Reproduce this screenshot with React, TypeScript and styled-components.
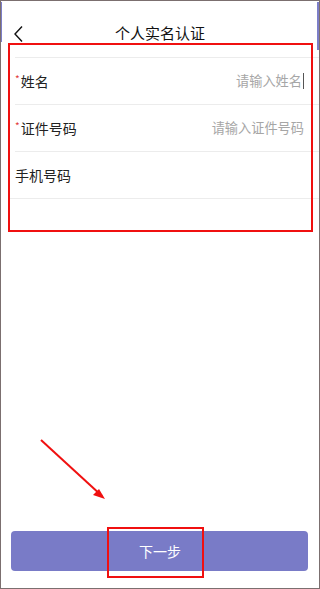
import React from "react";
import styled, { createGlobalStyle } from "styled-components";

const Global = createGlobalStyle`
  html, body { margin: 0; padding: 0; background: #7b6f6f; }
  body { font-family: "Noto Sans CJK SC", "Noto Sans", sans-serif; }
  * { box-sizing: border-box; }
`;

const Frame = styled.div`
  position: relative;
  margin: 1px 1px 1px 1px;
  width: 318px;
  height: 587px;
  background: #fff;
  display: flex;
  flex-direction: column;
  overflow: hidden;
`;

const EdgeStripe = styled.div<{ $side: "left" | "right" }>`
  position: absolute;
  top: 1px;
  ${(p) => (p.$side === "left" ? "left: 0;" : "right: 0;")}
  width: ${(p) => (p.$side === "left" ? "1px" : "2px")};
  height: ${(p) => (p.$side === "left" ? "40px" : "48px")};
  background: #7c7ec8;
`;

const Header = styled.div`
  position: relative;
  height: 46px;
  padding-top: 20px;
  display: flex;
  align-items: center;
  justify-content: center;
`;

const Back = styled.div`
  position: absolute;
  left: 11px;
  top: 24px;
  width: 14px;
  height: 18px;
  display: flex;
`;

const Title = styled.div`
  font-size: 15px;
  color: #111;
  line-height: 20px;
  margin-top: -3px;
`;

const Form = styled.div`
  padding-top: 10px;
  display: flex;
  flex-direction: column;
`;

const Row = styled.div`
  height: 47px;
  margin-left: 14px;
  border-top: 1px solid #ececec;
  display: flex;
  align-items: center;
  justify-content: space-between;
  padding-right: 15px;
  padding-bottom: 1px;
`;

const EndLine = styled.div`
  margin-left: 9px;
  border-top: 1px solid #ececec;
`;

const Label = styled.div`
  font-size: 14px;
  color: #222;
  display: flex;
  align-items: center;
`;

const Star = styled.span`
  color: #e23b3b;
  font-size: 10px;
  margin-right: 1px;
  margin-top: -4px;
`;

const Placeholder = styled.div`
  font-size: 13.2px;
  color: #a6a6a6;
  display: flex;
  align-items: center;
`;

const Cursor = styled.span`
  display: inline-block;
  width: 1px;
  height: 16px;
  background: #555;
  margin-left: 1px;
`;

const Spacer = styled.div`
  flex: 1;
`;

const Button = styled.div`
  margin: 0 11px 17px 10px;
  height: 40px;
  background: #797bc7;
  border-radius: 4px;
  color: #fff;
  font-size: 14px;
  display: flex;
  align-items: center;
  justify-content: center;
  padding-left: 1px;
`;

const RedBox = styled.div<{ $x: number; $y: number; $w: number; $h: number }>`
  position: absolute;
  left: ${(p) => p.$x}px;
  top: ${(p) => p.$y}px;
  width: ${(p) => p.$w}px;
  height: ${(p) => p.$h}px;
  border: 2px solid #f01010;
  pointer-events: none;
`;

const ArrowSvg = styled.svg`
  position: absolute;
  left: 0;
  top: 0;
  pointer-events: none;
`;

export default function App() {
  return (
    <>
      <Global />
      <Frame>
        <EdgeStripe $side="left" />
        <EdgeStripe $side="right" />
        <Header>
          <Back>
            <svg width="14" height="18" viewBox="0 0 14 18">
              <path d="M10 1.5 L3 9 L10 16.5" fill="none" stroke="#111" strokeWidth="1.4" />
            </svg>
          </Back>
          <Title>个人实名认证</Title>
        </Header>
        <Form>
          <Row>
            <Label>
              <Star>*</Star>姓名
            </Label>
            <Placeholder>
              请输入姓名<Cursor />
            </Placeholder>
          </Row>
          <Row>
            <Label>
              <Star>*</Star>证件号码
            </Label>
            <Placeholder>请输入证件号码</Placeholder>
          </Row>
          <Row>
            <Label>手机号码</Label>
          </Row>
          <EndLine />
        </Form>
        <Spacer />
        <Button>下一步</Button>
        <RedBox $x={7} $y={42} $w={305} $h={189} />
        <RedBox $x={106} $y={526} $w={97} $h={51} />
        <ArrowSvg width="318" height="587" viewBox="0 0 318 587">
          <line x1="40" y1="439" x2="101" y2="495" stroke="#f01010" strokeWidth="2" />
          <path d="M104 498 L92 494 L98 488 Z" fill="#f01010" />
        </ArrowSvg>
      </Frame>
    </>
  );
}
